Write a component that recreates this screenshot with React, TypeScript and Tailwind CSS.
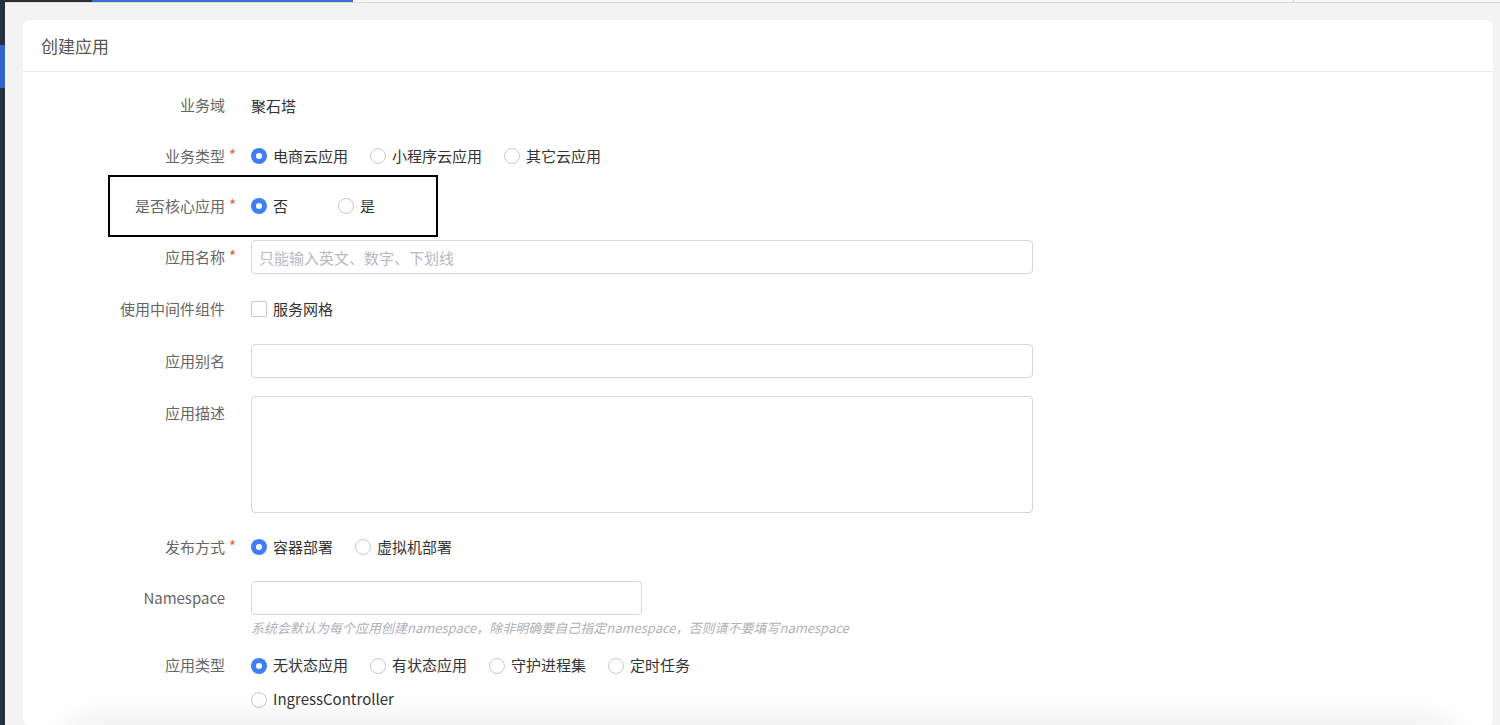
import React from "react";

const font = {
  fontFamily: '"Noto Sans CJK SC", "Noto Sans", "Liberation Sans", sans-serif',
};

function Radio({ label, checked, className = "" }: { label: string; checked?: boolean; className?: string }) {
  return (
    <label className={`flex items-center ${className}`}>
      {checked ? (
        <span className="flex h-[16px] w-[16px] items-center justify-center rounded-full bg-[#3e7ef5]">
          <span className="h-[6px] w-[6px] rounded-full bg-white" />
        </span>
      ) : (
        <span className="h-[16px] w-[16px] rounded-full border border-[#c9c9d2] bg-white" />
      )}
      <span className="ml-[6px] text-[15px] text-[#333]">{label}</span>
    </label>
  );
}

function Row({
  label,
  required,
  top,
  children,
  className = "",
}: {
  label: string;
  required?: boolean;
  top?: boolean;
  children: React.ReactNode;
  className?: string;
}) {
  return (
    <div className={`flex ${top ? "items-start" : "items-center"} ${className}`}>
      <div className="relative flex h-[34px] w-[228px] shrink-0 items-center justify-end pr-[26px] text-[15px] text-[#666]">
        {label}
        {required && <span className="absolute right-[15px] top-[5px] text-[15px] text-[#f0573a]">*</span>}
      </div>
      <div className="flex-1">{children}</div>
    </div>
  );
}

export default function App() {
  return (
    <div className="relative flex h-[725px] w-[1500px] overflow-hidden bg-[#f3f3f3]" style={font}>
      {/* side strip */}
      <div className="flex w-[5px] shrink-0 flex-col bg-[#25313d]">
        <div className="h-[45px]" />
        <div className="h-[43px] bg-[#3064c9]" />
      </div>

      <div className="flex flex-1 flex-col">
        {/* top tab strip */}
        <div className="flex h-[3px] shrink-0 border-b border-[#dcdcdc]">
          <div className="w-[87px] bg-[#2e2e2e]" />
          <div className="w-[261px] bg-[#3a6bd6]" />
          <div className="flex-1 bg-[#f7f7f7]" />
          <div className="w-px bg-[#d8d8d8]" />
          <div className="w-[206px] bg-[#f7f7f7]" />
        </div>

        <div className="flex-1 pl-[18px] pr-[7px] pt-[17px]">
          <div className="h-full rounded-[6px] bg-white">
            <div className="flex h-[52px] items-center border-b border-[#e5e5ef] px-[18px] text-[17px] text-[#555]">
              创建应用
            </div>

            <div className="flex flex-col pt-[16px]">
              <Row label="业务域">
                <span className="text-[15px] text-[#333]">聚石塔</span>
              </Row>

              <Row label="业务类型" required className="mt-[17px]">
                <div className="flex items-center gap-[22px]">
                  <Radio label="电商云应用" checked />
                  <Radio label="小程序云应用" />
                  <Radio label="其它云应用" />
                </div>
              </Row>

              <Row label="是否核心应用" required className="mt-[16px]">
                <div className="flex items-center">
                  <Radio label="否" checked className="w-[87px]" />
                  <Radio label="是" />
                </div>
              </Row>

              <Row label="应用名称" required className="mt-[17px]">
                <input
                  className="h-[34px] w-[782px] rounded-[4px] border border-[#d6d6de] px-[7px] text-[15px] outline-none placeholder:text-[#b8b8c0]"
                  placeholder="只能输入英文、数字、下划线"
                />
              </Row>

              <Row label="使用中间件组件" className="mt-[18px]">
                <label className="flex items-center">
                  <span className="h-[16px] w-[16px] rounded-[2px] border border-[#c9c9d2] bg-white" />
                  <span className="ml-[6px] text-[15px] text-[#333]">服务网格</span>
                </label>
              </Row>

              <Row label="应用别名" className="mt-[18px]">
                <input className="h-[34px] w-[782px] rounded-[4px] border border-[#d6d6de] px-[7px] text-[15px] outline-none" />
              </Row>

              <Row label="应用描述" top className="mt-[18px]">
                <textarea className="block h-[117px] w-[782px] resize-none rounded-[4px] border border-[#d6d6de] px-[7px] text-[15px] outline-none" />
              </Row>

              <Row label="发布方式" required className="mt-[17px]">
                <div className="flex items-center gap-[22px]">
                  <Radio label="容器部署" checked />
                  <Radio label="虚拟机部署" />
                </div>
              </Row>

              <Row label="Namespace" className="mt-[17px]">
                <input className="h-[34px] w-[391px] rounded-[4px] border border-[#d6d6de] px-[7px] text-[15px] outline-none" />
              </Row>
              <div className="ml-[228px] mt-[3px] text-[13px] italic text-[#b0b0b8]">
                系统会默认为每个应用创建namespace，除非明确要自己指定namespace，否则请不要填写namespace
              </div>

              <Row label="应用类型" top className="mt-[11px]">
                <div className="flex w-[460px] flex-wrap items-center gap-x-[22px]">
                  <div className="flex h-[34px] items-center">
                    <Radio label="无状态应用" checked />
                  </div>
                  <div className="flex h-[34px] items-center">
                    <Radio label="有状态应用" />
                  </div>
                  <div className="flex h-[34px] items-center">
                    <Radio label="守护进程集" />
                  </div>
                  <div className="flex h-[34px] items-center">
                    <Radio label="定时任务" />
                  </div>
                  <div className="flex h-[34px] items-center">
                    <Radio label="IngressController" />
                  </div>
                </div>
              </Row>
            </div>
          </div>
        </div>
      </div>

      {/* annotation box */}
      <div className="absolute left-[108px] top-[175px] h-[62px] w-[330px] border-2 border-black" />

      {/* footer shadow */}
      <div className="absolute left-[60px] right-[40px] top-[730px] h-[60px] rounded-full bg-white shadow-[0_-12px_30px_rgba(0,0,0,0.07)]" />
    </div>
  );
}
